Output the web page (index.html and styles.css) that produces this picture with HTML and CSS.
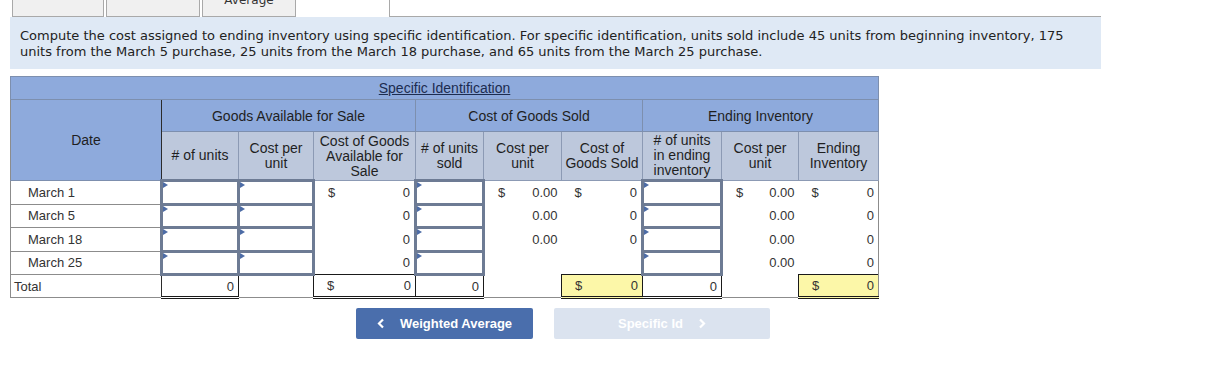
FILE: index.html
```html
<!DOCTYPE html>
<html>
<head>
<meta charset="utf-8">
<link rel="stylesheet" href="styles.css">
</head>
<body>
<div class="page">
  <div class="tabs">
    <div class="tab t1"></div>
    <div class="tab t2"></div>
    <div class="tab t3">Weighted<br>Average</div>
    <div class="tab active"></div>
    <div class="tabline"></div>
  </div>
  <div class="intro">Compute the cost assigned to ending inventory using specific identification. For specific identification, units sold include 45 units from beginning inventory, 175 units from the March 5 purchase, 25 units from the March 18 purchase, and 65 units from the March 25 purchase.</div>

  <table class="grid">
    <colgroup>
      <col style="width:151px"><col style="width:77px"><col style="width:75px"><col style="width:102px"><col style="width:68px"><col style="width:78px"><col style="width:81px"><col style="width:79px"><col style="width:77px"><col style="width:80px">
    </colgroup>
    <tr class="r-title"><th colspan="10" class="title"><span>Specific Identification</span></th></tr>
    <tr class="r-group">
      <th rowspan="2" class="date">Date</th>
      <th colspan="3" class="grp">Goods Available for Sale</th>
      <th colspan="3" class="grp">Cost of Goods Sold</th>
      <th colspan="3" class="grp">Ending Inventory</th>
    </tr>
    <tr class="r-sub">
      <th class="sub gl"># of units</th>
      <th class="sub">Cost per unit</th>
      <th class="sub">Cost of Goods Available for Sale</th>
      <th class="sub gl"># of units sold</th>
      <th class="sub">Cost per unit</th>
      <th class="sub">Cost of Goods Sold</th>
      <th class="sub gl narrow"># of units in ending inventory</th>
      <th class="sub">Cost per unit</th>
      <th class="sub">Ending Inventory</th>
    </tr>
    <tr class="row">
      <td class="lbl">March 1</td>
      <td class="in"></td><td class="in"></td>
      <td class="val"><div class="money"><span>$</span><span>0</span></div></td>
      <td class="in"></td>
      <td class="val"><div class="money"><span>$</span><span>0.00</span></div></td>
      <td class="val"><div class="money"><span>$</span><span>0</span></div></td>
      <td class="in"></td>
      <td class="val"><div class="money"><span>$</span><span>0.00</span></div></td>
      <td class="val edge"><div class="money"><span>$</span><span>0</span></div></td>
    </tr>
    <tr class="row">
      <td class="lbl">March 5</td>
      <td class="in"></td><td class="in"></td>
      <td class="val"><div class="money"><span></span><span>0</span></div></td>
      <td class="in"></td>
      <td class="val"><div class="money"><span></span><span>0.00</span></div></td>
      <td class="val"><div class="money"><span></span><span>0</span></div></td>
      <td class="in"></td>
      <td class="val"><div class="money"><span></span><span>0.00</span></div></td>
      <td class="val edge"><div class="money"><span></span><span>0</span></div></td>
    </tr>
    <tr class="row">
      <td class="lbl">March 18</td>
      <td class="in"></td><td class="in"></td>
      <td class="val"><div class="money"><span></span><span>0</span></div></td>
      <td class="in"></td>
      <td class="val"><div class="money"><span></span><span>0.00</span></div></td>
      <td class="val"><div class="money"><span></span><span>0</span></div></td>
      <td class="in"></td>
      <td class="val"><div class="money"><span></span><span>0.00</span></div></td>
      <td class="val edge"><div class="money"><span></span><span>0</span></div></td>
    </tr>
    <tr class="row">
      <td class="lbl">March 25</td>
      <td class="in"></td><td class="in"></td>
      <td class="val"><div class="money"><span></span><span>0</span></div></td>
      <td class="in"></td>
      <td class="val"></td>
      <td class="val"></td>
      <td class="in"></td>
      <td class="val"><div class="money"><span></span><span>0.00</span></div></td>
      <td class="val edge"><div class="money"><span></span><span>0</span></div></td>
    </tr>
    <tr class="total">
      <td class="lbl tlbl">Total</td>
      <td class="tot"><div class="money"><span></span><span>0</span></div></td>
      <td class="blank"></td>
      <td class="tot"><div class="money"><span>$</span><span>0</span></div></td>
      <td class="tot"><div class="money"><span></span><span>0</span></div></td>
      <td class="blank"></td>
      <td class="tot hl"><div class="money"><span>$</span><span>0</span></div></td>
      <td class="tot"><div class="money"><span></span><span>0</span></div></td>
      <td class="blank"></td>
      <td class="tot hl edge"><div class="money"><span>$</span><span>0</span></div></td>
    </tr>
  </table>

  <div class="nav">
    <button class="btn prev"><svg class="chev" width="8" height="11" viewBox="0 0 8 11"><polyline points="6,1.5 2,5.5 6,9.5" fill="none" stroke="#fff" stroke-width="2.2"/></svg>Weighted Average</button>
    <button class="btn next">Specific Id<svg class="chev" width="8" height="11" viewBox="0 0 8 11"><polyline points="2,1.5 6,5.5 2,9.5" fill="none" stroke="#fff" stroke-width="2.2"/></svg></button>
  </div>
</div>
</body>
</html>
```

FILE: styles.css
```css
* { box-sizing: border-box; }

body {
  margin: 0;
  background: #ffffff;
  font-family: "Liberation Sans", Arial, sans-serif;
  color: #222;
}

.page {
  padding-left: 10px;
  width: 1101px;
}

/* ---------- tabs ---------- */
.tabs {
  display: flex;
  align-items: flex-end;
  height: 17px;
  overflow: hidden;
  padding-left: 2px;
}

.tab {
  height: 40px;
  background: #f0f0f0;
  border: 1px solid #a9a9a9;
  font-family: "DejaVu Sans", Verdana, sans-serif;
  font-size: 12px;
  line-height: 15px;
  color: #333;
  text-align: center;
  display: flex;
  flex-direction: column;
  justify-content: flex-end;
  padding-bottom: 8px;
}

.t1 { width: 92px; margin-right: 2px; }
.t2 { width: 94px; margin-right: 2px; }
.t3 { width: 94px; }

.tab.active {
  width: 94px;
  background: #fff;
  border-top: none;
  border-left: none;
  border-bottom: none;
}

.tabline {
  flex: 1;
  height: 1px;
  background: #a9a9a9;
}

/* ---------- intro ---------- */
.intro {
  background: #dfe9f5;
  padding: 11px 20px 9px 10px;
  font-family: "DejaVu Sans", Verdana, sans-serif;
  font-size: 13px;
  line-height: 16px;
  color: #222;
}

/* ---------- table ---------- */
.grid {
  margin-top: 7px;
  border-collapse: collapse;
  table-layout: fixed;
  width: 868px;
  font-size: 13px;
}

.grid th {
  font-weight: normal;
  font-size: 14px;
  color: #1f1f1f;
  padding: 0;
}

.title {
  height: 23px;
  background: #8eaadc;
  border: 1px solid #7d8fae;
  text-align: center;
  vertical-align: middle;
}

.title span {
  text-decoration: underline;
  color: #1c2c50;
}

.r-group th {
  height: 32px;
  background: #8eaadc;
  border: 1px solid #7d8fae;
}

.grp {
  border-left: 1px solid #2b2b2b !important;
}

.date {
  vertical-align: middle;
  border-left: 1px solid #8c8c8c !important;
  border-right: 1px solid #2b2b2b !important;
  padding-bottom: 1px !important;
}

.grid .sub {
  height: 49px;
  background: #bdc8dc;
  border: 1px solid #8c9ab4;
  line-height: 15px;
  vertical-align: middle;
  padding: 0 3px;
}

.grid .sub.narrow {
  padding: 0 6px;
}

.sub.gl {
  border-left: 1px solid #2b2b2b;
}

.row td {
  height: 23.5px;
  padding: 0;
  color: #333;
}

.lbl {
  padding-left: 17px !important;
  border: 1px solid #8c8c8c;
  border-right: 1px solid #2b2b2b;
  background: #fff;
}

.tlbl {
  padding-left: 3px !important;
}

.in {
  border: 3px solid #6d7b94;
  position: relative;
  background: #fff;
}

.in::before {
  content: "";
  position: absolute;
  left: 0;
  top: 0;
  width: 0;
  height: 0;
  border-top: 3px solid transparent;
  border-bottom: 3px solid transparent;
  border-left: 5px solid #4d6ca6;
}

.val {
  border: none;
}

.edge {
  border-right: 1px solid #8c8c8c !important;
}

.money {
  display: flex;
  justify-content: space-between;
  padding: 0 4px 0 13px;
}

.total td {
  height: 23px;
  padding: 0;
  color: #333;
  border-bottom: 1px solid #8c8c8c;
}

.total .tot {
  border: 1px solid #1a1a1a;
  border-bottom: 3px double #1a1a1a;
}

.total .hl {
  background: #fcf7a8;
}

.total .blank {
  border-top: none;
}

/* ---------- nav buttons ---------- */
.nav {
  display: flex;
  gap: 21px;
  margin-top: 9px;
  padding-left: 346px;
}

.btn {
  height: 31px;
  border: none;
  border-radius: 2px;
  font-family: "Liberation Sans", Arial, sans-serif;
  font-size: 13px;
  font-weight: bold;
  color: #fff;
  display: flex;
  align-items: center;
  justify-content: center;
  gap: 15px;
  padding: 0;
}

.prev {
  width: 177px;
  background: #4a6eac;
}

.next {
  width: 216px;
  background: #dbe3ef;
}
```
